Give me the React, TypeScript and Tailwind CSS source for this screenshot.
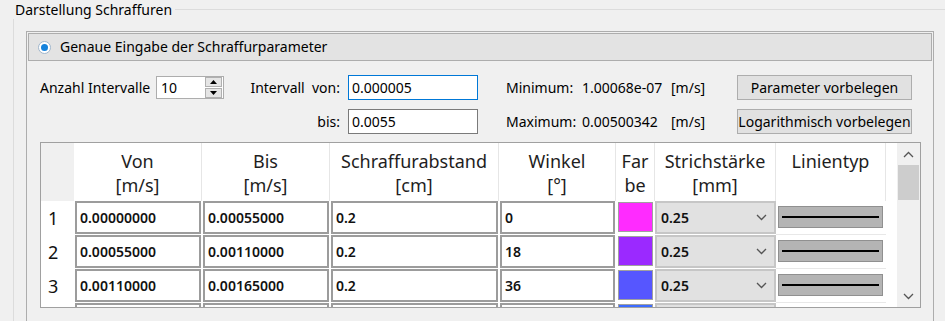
import React from "react";

type Row = { von: string; bis: string; abst: string; winkel: string; color: string };

const rows: Row[] = [
  { von: "0.00000000", bis: "0.00055000", abst: "0.2", winkel: "0", color: "#ff2bff" },
  { von: "0.00055000", bis: "0.00110000", abst: "0.2", winkel: "18", color: "#9b29ff" },
  { von: "0.00110000", bis: "0.00165000", abst: "0.2", winkel: "36", color: "#5656ff" },
  { von: "", bis: "", abst: "", winkel: "", color: "#3d6cff" },
];

const cols = "grid grid-cols-[33px_128px_128px_169px_117px_39px_121px_110px_11px]";

function Chevron({ up }: { up?: boolean }) {
  return (
    <svg width="11" height="7" viewBox="0 0 11 7">
      <path d={up ? "M1 6 L5.5 1.5 L10 6" : "M1 1 L5.5 5.5 L10 1"} fill="none" stroke="#555" strokeWidth="1.3" />
    </svg>
  );
}

function Button({ children }: { children: React.ReactNode }) {
  return (
    <div className="w-[175px] h-[25px] flex items-center justify-center bg-[#e1e1e1] border border-[#adadad] text-[14px] text-[#000]">
      {children}
    </div>
  );
}

export default function App() {
  return (
    <div className="w-[945px] h-[321px] overflow-hidden bg-[#f0f0f0] text-[#000] font-['Noto_Sans',sans-serif] text-[14px] leading-none">
      <div className="flex items-center h-[19px] pl-[15px]">
        <span className="text-[14px] leading-none">Darstellung Schraffuren</span>
        <div className="flex-1 h-px bg-[#dcdcdc] ml-[3px]" />
      </div>
      <div className="ml-[13px] border-l border-[#dcdcdc] pl-[12px] pt-[12px] h-[302px]">
        <div className="w-[908px] h-[300px] border border-[#adadad] p-px">
          <div className="h-[28px] border border-[#adadad] bg-[#e3e3e3] flex items-center pl-[9px]">
            <div className="w-[13px] h-[13px] rounded-full border border-[#9fb6cc] bg-white flex items-center justify-center">
              <div className="w-[7px] h-[7px] rounded-full bg-[#1482dc]" />
            </div>
            <span className="ml-[9px]">Genaue Eingabe der Schraffurparameter</span>
          </div>

          <div className="pl-[12px] pt-[14px]">
            <div className="flex items-center h-[25px]">
              <div className="w-[116px]">Anzahl Intervalle</div>
              <div className="w-[68px] h-[23px] border border-[#adadad] bg-white flex items-center">
                <span className="flex-1 pl-[4px]">10</span>
                <div className="w-[17px] h-[21px] mr-px flex flex-col gap-px">
                  <div className="flex-1 bg-[#e5e5e5] border border-[#b0b0b0] flex items-center justify-center">
                    <svg width="7" height="4" viewBox="0 0 7 4"><path d="M0 4 L3.5 0 L7 4 Z" fill="#000" /></svg>
                  </div>
                  <div className="flex-1 bg-[#e5e5e5] border border-[#b0b0b0] flex items-center justify-center">
                    <svg width="7" height="4" viewBox="0 0 7 4"><path d="M0 0 L3.5 4 L7 0 Z" fill="#000" /></svg>
                  </div>
                </div>
              </div>
              <div className="w-[124px] pr-[8px] text-right whitespace-pre">Intervall  von:</div>
              <div className="w-[130px] h-[25px] border border-[#0078d7] bg-white flex items-center pl-[3px]">0.000005</div>
              <div className="w-[28px]" />
              <div className="w-[76px]">Minimum:</div>
              <div className="w-[89px]">1.00068e-07</div>
              <div className="w-[66px]">[m/s]</div>
              <Button>Parameter vorbelegen</Button>
            </div>
            <div className="flex items-center h-[25px] mt-[9px]">
              <div className="w-[184px]" />
              <div className="w-[124px] pr-[8px] text-right">bis:</div>
              <div className="w-[130px] h-[25px] border border-[#7a7a7a] bg-white flex items-center pl-[3px]">0.0055</div>
              <div className="w-[28px]" />
              <div className="w-[76px]">Maximum:</div>
              <div className="w-[89px]">0.00500342</div>
              <div className="w-[66px]">[m/s]</div>
              <Button>Logarithmisch vorbelegen</Button>
            </div>

            <div className="mt-[8px] w-[881px] h-[166px] border border-[#a0a0a0] bg-white flex">
              <div className="w-[856px] flex flex-col">
                <div className={`${cols} h-[58px] text-[18px] text-[#1e1e1e] leading-[24px]`}>
                  <div className="bg-[#f0f0f0]" />
                  {[
                    ["Von", "[m/s]"],
                    ["Bis", "[m/s]"],
                    ["Schraffurabstand", "[cm]"],
                    ["Winkel", "[°]"],
                    ["Far", "be"],
                    ["Strichstärke", "[mm]"],
                    ["Linientyp", ""],
                  ].map(([a, b], i) => (
                    <div key={i} className="border-r border-[#e6e6e6] pt-[6px] flex flex-col items-center">
                      <span>{a}</span>
                      <span>{b}</span>
                    </div>
                  ))}
                  <div />
                </div>
                <div className="h-[106px] overflow-hidden">
                  {rows.map((r, i) => (
                    <div key={i} className={`${cols} h-[34px] text-[14px] font-semibold text-[#111]`}>
                      <div className="pl-[7px] flex items-center text-[18px] font-normal leading-none pb-px">{i < 3 ? i + 1 : ""}</div>
                      {[r.von, r.bis, r.abst, r.winkel].map((v, j) => (
                        <div key={j} className="mx-px mb-px h-[33px] border-2 border-[#9c9c9c] bg-white flex items-center pl-[3px]">
                          {v}
                        </div>
                      ))}
                      <div className="mx-[2px] mt-px h-[30px] border border-[#a0a0a0]" style={{ backgroundColor: r.color }} />
                      <div className="mb-px h-[33px] border-2 border-[#c6c6c6] bg-[#e1e1e1] flex items-center pl-[4px] pr-[7px] justify-between">
                        <span>{i < 3 ? "0.25" : ""}</span>
                        <Chevron />
                      </div>
                      <div className="border-b border-[#e8e8e8] pl-[2px] pr-[3px] pt-[5px]">
                        <div className="h-[22px] bg-[#b4b4b4] border border-[#909090] flex items-center px-[3px]">
                          <div className="h-[2px] w-full bg-black" />
                        </div>
                      </div>
                      <div />
                    </div>
                  ))}
                </div>
              </div>
              <div className="w-[23px] bg-[#f0f0f0] flex flex-col">
                <div className="h-[22px] flex items-center justify-center"><Chevron up /></div>
                <div className="h-[35px] bg-[#cdcdcd] mx-px" />
                <div className="flex-1" />
                <div className="h-[22px] flex items-center justify-center"><Chevron /></div>
              </div>
            </div>
          </div>
        </div>
      </div>
    </div>
  );
}
